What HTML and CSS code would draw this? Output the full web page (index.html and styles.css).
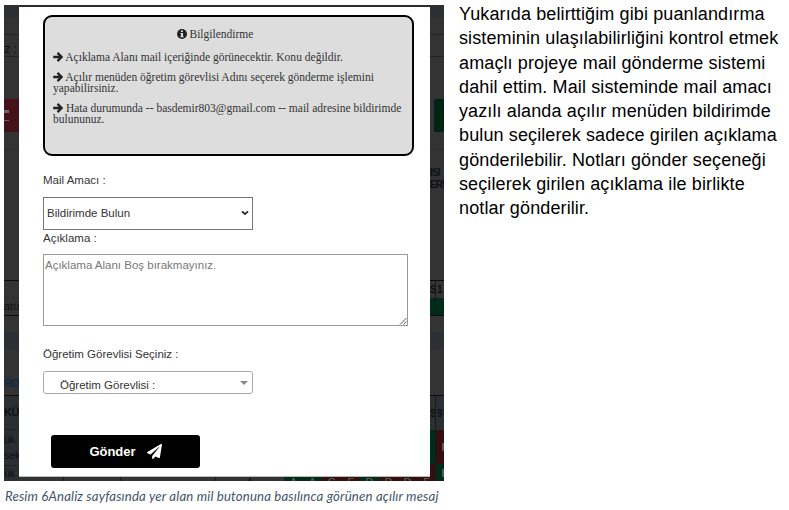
FILE: index.html
```html
<!DOCTYPE html>
<html lang="tr">
<head>
<meta charset="utf-8">
<title>Bilgilendirme</title>
<link rel="stylesheet" href="styles.css">
</head>
<body>
<svg width="0" height="0" class="defs"><symbol id="arrow" viewBox="0 0 10 10"><path d="M.2 5H8M4.500 .9 8.600 5l-4.100 4.100" fill="none" stroke="currentColor" stroke-width="2.300"/></symbol></svg>
<main class="page">
<figure class="figure">
  <div class="shot">
    <div class="edge top"></div>
    <div class="side left">
      <div class="r head h13"></div>
      <div class="r line h17"></div>
      <div class="r line h22 zed"><span>z :</span></div>
      <div class="r h42"></div>
      <div class="r h33 red dash"><i></i></div>
      <div class="r h18 faint"></div>
      <div class="r h131 dark"></div>
      <div class="r h17 faint"></div>
      <div class="r h18 dark"><span>atü</span></div>
      <div class="r h16"></div>
      <div class="r h17 head"></div>
      <div class="r h47 dark link"><span>RD</span></div>
      <div class="r h34 cell line bold"><span>KÜ</span></div>
      <div class="r h36 cell line"><span>ük<br>sek</span></div>
      <div class="r h15 cell"><span>ük</span></div>
    </div>
    <section class="modal">
      <div class="info">
        <p class="title"><svg class="badge" viewBox="0 0 10 10"><circle cx="5" cy="5" r="5" fill="#222"/><path d="M4 1.500h2v1.600H4zM3.500 4H6v3.200h.7v1.100H3.400V7.200H4V5.100h-.5z" fill="#ddd"/></svg> <span>Bilgilendirme</span></p>
        <p><svg class="arrow"><use href="#arrow"/></svg> <span>Açıklama Alanı mail içeriğinde görünecektir. Konu değildir.</span></p>
        <p><svg class="arrow"><use href="#arrow"/></svg> <span>Açılır menüden öğretim görevlisi Adını seçerek gönderme işlemini</span><br><span>yapabilirsiniz.</span></p>
        <p><svg class="arrow"><use href="#arrow"/></svg> <span>Hata durumunda -- basdemir803@gmail.com -- mail adresine bildirimde</span><br><span>bulununuz.</span></p>
      </div>
      <div class="label l1"><span>Mail Amacı :</span></div>
      <div class="select"><span>Bildirimde Bulun</span><svg width="8" height="6" viewBox="0 0 8 6"><path d="m1 1.300 3 2.800 3-2.800" fill="none" stroke="#222" stroke-width="1.800"/></svg></div>
      <div class="label l2"><span>Açıklama :</span></div>
      <div class="area"><span>Açıklama Alanı Boş bırakmayınız.</span><svg width="8" height="8" viewBox="0 0 8 8"><path d="M1 7.500 7.500 1M4.500 7.500l3-3" stroke="#555" fill="none"/></svg></div>
      <div class="label l3"><span>Öğretim Görevlisi Seçiniz :</span></div>
      <div class="picker"><span>Öğretim Görevlisi :</span><svg width="8" height="4" viewBox="0 0 8 4"><path d="M0 0h8L4 4z" fill="#888"/></svg></div>
      <div class="send"><span>Gönder</span><svg width="15" height="15" viewBox="0 0 512 512"><path fill="#fff" d="M476 3.200 12.500 270.600c-18.100 10.400-15.800 35.600 2.200 43.200L121 358.400l287.300-253.200c5.500-4.900 13.300 2.600 8.600 8.300L176 407v80.500c0 23.600 28.500 32.900 42.500 15.800L282 426l124.600 52.200c14.200 6 30.400-2.900 33-18.200l72-432C515 7.800 493.300-6.800 476 3.200z"/></svg></div>
    </section>
    <div class="side right">
      <div class="r head h13"></div>
      <div class="r line h17"></div>
      <div class="r line h22"></div>
      <div class="r h42"></div>
      <div class="r h33 pill"><i></i></div>
      <div class="r h18 faint"></div>
      <div class="r h131 dark names"><span>ISI<br>ERİ</span></div>
      <div class="r h17 duo"><b>S</b><b>1</b></div>
      <div class="r h18 dark duo"><b class="green"></b><b class="green"></b></div>
      <div class="r h16"></div>
      <div class="r h17 head"></div>
      <div class="r h47 dark"></div>
      <div class="r h34 cell duo"><b>S</b><b>9</b></div>
      <div class="r h34 duo"><b class="green"></b><b class="red2 mark"><i></i></b></div>
      <div class="r h17 duo"><b class="red2"></b><b class="green mark"><i></i></b></div>
    </div>
    <div class="edge bottom"><b class="w45"></b><b class="w57"></b><b class="w95"></b><b class="w68">A</b><b class="w19 green">A</b><b class="w19 green">A</b><b class="w19 red2">C</b><b class="w19 red2">F</b><b class="w19 green">D</b><b class="w19 red2">D</b><b class="w19 red2">D</b><b class="w19 red2">F</b></div>
  </div>
  <figcaption><span>Resim 6Analiz sayfasında yer alan mil butonuna basılınca görünen açılır mesaj</span></figcaption>
</figure>
<p class="prose">Yukarıda belirttiğim gibi puanlandırma<br>sisteminin ulaşılabilirliğini kontrol etmek<br>amaçlı projeye mail gönderme sistemi<br>dahil ettim. Mail sisteminde mail amacı<br>yazılı alanda açılır menüden bildirimde<br>bulun seçilerek sadece girilen açıklama<br>gönderilebilir. Notları gönder seçeneği<br>seçilerek girilen açıklama ile birlikte<br>notlar gönderilir.</p>
</main>
</body>
</html>
```
FILE: styles.css
```css
* { box-sizing: border-box; }
body { margin: 0; background: #fff; font-family: "Liberation Sans", Arial, sans-serif; overflow: hidden; }
p, figure { margin: 0; }
.defs { position: absolute; }
.page { display: flex; width: 789px; height: 510px; padding: 5px 0 0 4px; }
.figure { width: 440px; flex: none; white-space: nowrap; }
.shot { display: grid; grid-template: 2px 470px 4px / 15px 411px 14px; width: 440px; height: 476px; background: #333; overflow: hidden; }
.edge.top { grid-area: 1 / 1 / 2 / 4; background: #2e2c2f; }
.side { grid-row: 1 / 4; overflow: hidden; display: flex; flex-direction: column; font-size: 12px; color: #0e1114; }
.side.left { grid-column: 1; }
.side.right { grid-column: 3; }
.modal { grid-area: 2 / 2; background: #fff; padding: 8px 16px 0 24px; border-bottom: 1px solid #bbb; }
.edge.bottom { grid-area: 3 / 2; display: flex; overflow: hidden; font-size: 11px; line-height: 10px; color: #64625f; }
.edge.bottom b { flex: none; font-weight: normal; text-align: center; height: 4px; overflow: hidden; }
.w45 { width: 45px; border-right: 1px solid #181818; }
.w57 { width: 57px; border-right: 1px solid #181818; }
.w95 { width: 95px; border-right: 1px solid #181818; }
.edge.bottom .w68 { width: 68px; color: #111; }
.w19 { width: 19px; }
.r { flex: none; overflow: hidden; display: flex; }
.h13 { height: 13px; } .h15 { height: 15px; } .h16 { height: 16px; } .h17 { height: 17px; }
.h18 { height: 18px; } .h22 { height: 22px; } .h33 { height: 33px; } .h34 { height: 34px; }
.h36 { height: 36px; } .h42 { height: 42px; } .h47 { height: 47px; } .h131 { height: 131px; }
.head { background: #2c2f33; }
.line { border-bottom: 1px solid #202225; }
.faint { border-bottom: 1px solid #2b2d30; }
.dark { border-bottom: 1px solid #0b0b0b; }
.cell { background: #2c2f32; }
.red { background: #45121a; }
.red2 { background: #340f0d; }
.green { background: #002d19; }
.zed span { font-size: 13px; line-height: 28px; letter-spacing: -.5px; }
.dash { align-items: center; }
.dash i { width: 5px; height: 11px; border: solid #666; border-width: 3px 0 1px; }
.left .h18 span { line-height: 17px; font-size: 11px; }
.link { align-items: flex-end; font-weight: bold; color: #0d2a47; font-size: 11px; line-height: 24px; letter-spacing: -.5px; }
.bold { font-weight: bold; font-size: 11px; line-height: 33px; letter-spacing: -.5px; }
.left .h36 span, .left .h15 span { font-size: 11px; line-height: 16px; padding-top: 1px; letter-spacing: -.3px; }
.left .h15 span { margin-top: -2px; }
.pill { padding-left: 4px; }
.pill i { width: 12px; border-radius: 2px 0 0 2px; background: #002413; }
.names { padding-top: 17px; font-size: 10px; line-height: 12px; font-weight: bold; letter-spacing: -.8px; }
.duo b { flex: 1; display: flex; align-items: center; font-size: 10px; overflow: hidden; }
.duo b:first-child { flex: 0 0 6px; border-right: 1px solid #17191a; }
.duo b + b { padding-left: 1px; }
.mark { justify-content: flex-end; }
.mark i { width: 2px; height: 8px; background: #555; }
.info { width: 371px; height: 141px; border: 2px solid #000; border-radius: 9px; background: #ddd; padding: 13px 0 0 8px; color: #333; font: 11.530px/11px "Liberation Serif", "Times New Roman", serif; }
.info p { margin-bottom: 9px; }
.info .title { text-align: center; padding-right: 35px; margin: -1px 0 12px; }
.badge { width: 10px; height: 10px; vertical-align: -1px; }
.arrow { width: 10px; height: 10px; vertical-align: -1px; color: #222; }
.label, .select, .area, .picker { color: #333; font-size: 11.500px; }
.label { display: flex; align-items: center; height: 16px; }
.l1 { margin-top: 16px; }
.select { margin-top: 9px; width: 210px; height: 33px; border: 1px solid #777; display: flex; align-items: center; justify-content: space-between; padding: 0 3px 1px 3px; }
.area { margin-top: 8px; width: 365px; height: 72px; border: 1px solid #999; padding: 3px 1px; line-height: 14px; color: #777; display: flex; justify-content: space-between; }
.area svg { align-self: flex-end; margin: 0 -1px -3px 0; }
.l3 { margin-top: 20px; }
.picker { margin-top: 9px; width: 210px; height: 23px; border: 1px solid #aaa; border-radius: 3px; display: flex; align-items: center; justify-content: space-between; padding: 0 4px 0 16px; }
.picker span { padding-top: 5px; }
.send { margin: 41px 0 0 8px; width: 149px; height: 33px; border-radius: 3px; background: #000; color: #fff; font-size: 13px; font-weight: bold; display: flex; align-items: center; justify-content: center; gap: 11px; }
figcaption { padding: 7px 0 0 1px; color: #44546a; font: italic 13.200px/17px Lato, sans-serif; letter-spacing: .16px; }
.prose { margin: -3px 0 0 15px; font-size: 18px; line-height: 24.300px; letter-spacing: .12px; color: #000; white-space: nowrap; }
```
